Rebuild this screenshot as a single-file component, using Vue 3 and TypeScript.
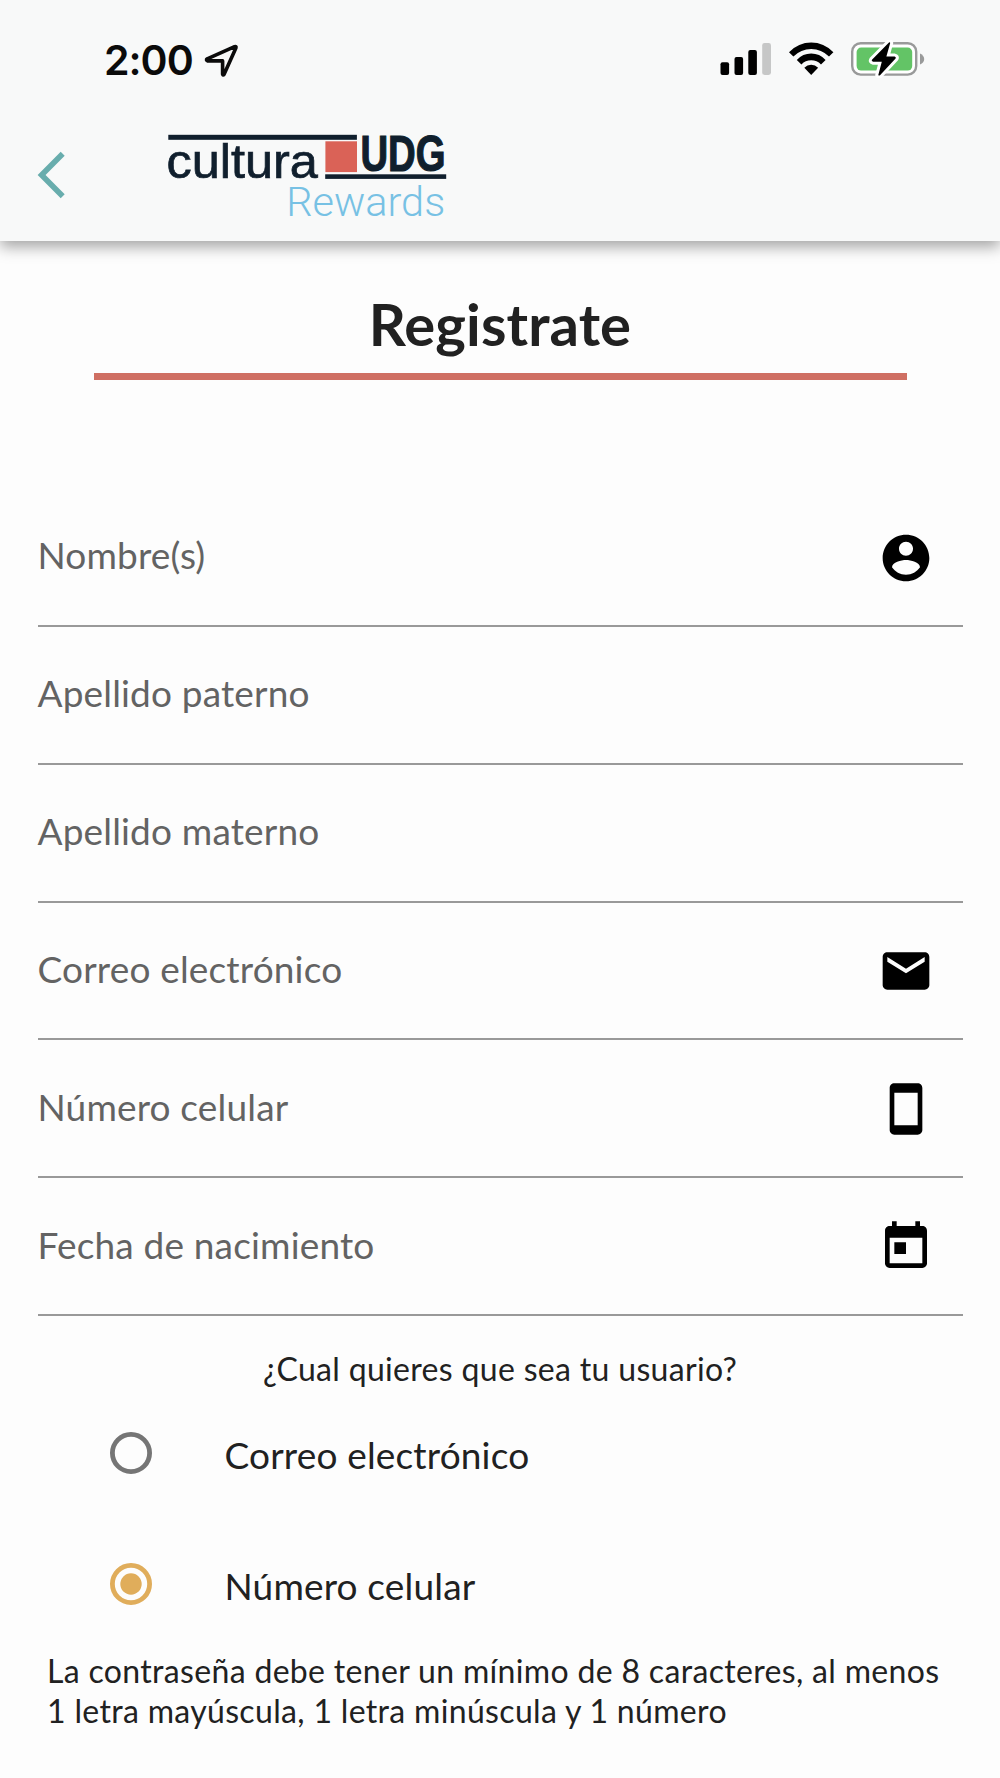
<script setup lang="ts">
import { ref } from 'vue'

interface Field {
  label: string
  icon?: string
}

const fields: Field[] = [
  {
    label: 'Nombre(s)',
    icon: 'M12 2C6.48 2 2 6.48 2 12s4.48 10 10 10 10-4.48 10-10S17.52 2 12 2zm0 3c1.66 0 3 1.34 3 3s-1.34 3-3 3-3-1.34-3-3 1.34-3 3-3zm0 14.2c-2.5 0-4.71-1.28-6-3.22.03-1.99 4-3.08 6-3.08 1.99 0 5.97 1.09 6 3.08-1.29 1.94-3.5 3.22-6 3.22z',
  },
  { label: 'Apellido paterno' },
  { label: 'Apellido materno' },
  {
    label: 'Correo electrónico',
    icon: 'M20 4H4c-1.1 0-1.99.9-1.99 2L2 18c0 1.1.9 2 2 2h16c1.1 0 2-.9 2-2V6c0-1.1-.9-2-2-2zm0 4l-8 5-8-5V6l8 5 8-5v2z',
  },
  {
    label: 'Número celular',
    icon: 'M17 1.01L7 1c-1.1 0-1.99.9-1.99 2v18c0 1.1.89 2 1.99 2h10c1.1 0 2-.9 2-2V3c0-1.1-.9-1.99-2-1.99zM17 19H7V5h10v14z',
  },
  {
    label: 'Fecha de nacimiento',
    icon: 'M19 3h-1V1h-2v2H8V1H6v2H5c-1.11 0-1.99.9-1.99 2L3 19c0 1.1.89 2 2 2h14c1.1 0 2-.9 2-2V5c0-1.1-.9-2-2-2zm0 16H5V8h14v11zM7 10h5v5H7z',
  },
]

const options: string[] = ['Correo electrónico', 'Número celular']
const selected = ref<string>('Número celular')
</script>

<template>
  <div class="screen">
    <header class="header">
      <div class="status">
        <div class="clock">
          <span class="time">2:00</span>
          <svg class="location" width="36" height="36" viewBox="0 0 36 36">
            <path d="M4.2 16.8L31.6 4.6Q33.6 4 32.9 6L21 32.4Q20 33.8 19.6 32V18.9H4.6Q2.6 17.9 4.2 16.8Z" fill="none" stroke="#0b0b0b" stroke-width="3.6" stroke-linejoin="round" />
          </svg>
        </div>
        <svg class="indicators" width="206" height="38" viewBox="720 40 206 38">
          <rect x="720.5" y="62.3" width="8.6" height="12.7" rx="2" />
          <rect x="734.5" y="57" width="8.6" height="18" rx="2" />
          <rect x="748.3" y="50" width="8.6" height="25" rx="2" />
          <rect x="762.2" y="43" width="8.8" height="32" rx="2.4" fill="#c6c7c7" />
          <path d="M789 52.2Q798.5 42.5 811.2 42.5T833.4 52.2L829 56.6Q821.5 49 811.2 49T793.4 56.6Z" />
          <path d="M796.8 60Q802.8 53.6 811.2 53.6T825.6 60L821 64.4Q817 60.2 811.2 60.2T801.4 64.4Z" />
          <path d="M804.3 67.7Q807.2 64.8 811.2 64.8T818.1 67.7L811.2 75Z" />
          <rect x="852.2" y="43.2" width="64" height="31.4" rx="8.5" fill="#fff" stroke="#999a9a" stroke-width="2.4" />
          <rect x="856.6" y="47.6" width="55.6" height="23" rx="4.5" fill="#63c466" />
          <path d="M920 53.4Q924.2 55.4 924.2 59T920 64.6Z" fill="#999a9a" />
          <path d="M889 42.5L872.2 59.6Q871 61.4 873.2 61.7H881.8L878.3 75Q878.8 76 880 75.2L895.6 58.4Q896.4 57 894.6 56.6H886.4L890.2 43Q890 42 889 42.5Z" stroke="#fff" stroke-width="6" paint-order="stroke" />
        </svg>
      </div>
      <div class="bar">
        <svg class="back" width="30" height="50" viewBox="0 0 30 50">
          <path d="M25.7 3.7L4.6 25L25.7 46.3" fill="none" stroke="#68adad" stroke-width="5.6" />
        </svg>
        <svg class="logo" width="290" height="112" viewBox="166 120 290 112">
          <rect x="168.3" y="134.8" width="188.6" height="5" fill="#101f2d" />
          <rect x="325.4" y="141.3" width="31.6" height="30.8" fill="#da6257" />
          <rect x="325.2" y="174.3" width="121" height="4.6" fill="#101f2d" />
          <text x="166.4" y="178.2" textLength="151.5" lengthAdjust="spacingAndGlyphs" class="logo-cultura">cultura</text>
          <text x="360.4" y="171.2" textLength="85" lengthAdjust="spacingAndGlyphs" class="logo-udg">UDG</text>
          <text x="286.2" y="216" textLength="159" lengthAdjust="spacingAndGlyphs" class="logo-rewards">Rewards</text>
        </svg>
      </div>
    </header>

    <main class="content">
      <h1 class="title">Registrate</h1>

      <form class="form">
        <div v-for="field in fields" :key="field.label" class="field">
          <span class="label">{{ field.label }}</span>
          <svg v-if="field.icon" class="icon" viewBox="0 0 24 24">
            <path :d="field.icon" />
          </svg>
        </div>
      </form>

      <p class="question">¿Cual quieres que sea tu usuario?</p>

      <div class="options">
        <div v-for="option in options" :key="option" class="option" @click="selected = option">
          <svg class="radio" :class="{ on: option === selected }" width="44" height="46" viewBox="0 0 44 46">
            <circle cx="22" cy="23" r="18.6" fill="none" stroke="currentColor" stroke-width="4.8" />
            <circle v-if="option === selected" cx="22" cy="23" r="10.7" fill="currentColor" />
          </svg>
          <span class="option-label">{{ option }}</span>
        </div>
      </div>

      <p class="hint">La contraseña debe tener un mínimo de 8 caracteres, al menos<br>1 letra mayúscula, 1 letra minúscula y 1 número</p>
    </main>
  </div>
</template>

<style>
body {
  margin: 0;
  background: #fdfdfd;
}
</style>

<style scoped>
.screen {
  width: 1000px;
  height: 1778px;
  overflow: hidden;
  background: #fdfdfd;
  color: #212121;
  font-family: Lato, 'Open Sans', sans-serif;
}
.header {
  box-sizing: border-box;
  height: 241px;
  background: #f8f9f9;
  box-shadow: 0 6px 14px rgba(0, 0, 0, 0.35);
}
.status {
  display: flex;
  justify-content: space-between;
  box-sizing: border-box;
  height: 120px;
  padding: 40px 74px 0 104px;
}
.clock {
  display: flex;
}
.time {
  width: 99px;
  font: 600 41px/40px Inter, sans-serif;
  letter-spacing: -1px;
  color: #0b0b0b;
}
.location {
  margin-top: 2px;
}
.bar {
  display: flex;
  align-items: flex-start;
}
.back {
  margin: 30px 99px 0 37px;
}
.logo-cultura {
  font: 49px 'Liberation Sans', sans-serif;
  fill: #101f2d;
  stroke: #101f2d;
  stroke-width: 0.7px;
}
.logo-udg {
  font: bold 50.5px 'Liberation Sans', sans-serif;
  fill: #101f2d;
  stroke: #101f2d;
  stroke-width: 1.2px;
}
.logo-rewards {
  font: 300 41px Roboto, sans-serif;
  fill: #77c1e4;
}
.content {
  padding-top: 48px;
}
.title {
  width: 813px;
  height: 84px;
  margin: 0 auto;
  border-bottom: 7px solid #cf6f63;
  text-align: center;
  font-size: 58px;
  font-weight: 700;
  letter-spacing: 0.1px;
  line-height: 70px;
}
.form {
  margin: 109px 37.5px 0;
}
.field {
  display: flex;
  align-items: center;
  justify-content: space-between;
  box-sizing: border-box;
  height: 137.85px;
  padding-right: 28.5px;
  border-bottom: 2px solid #999;
}
.label {
  padding: 0 0 3px;
  font-size: 37px;
  line-height: 44px;
  letter-spacing: 0.17px;
  color: #636363;
}
.icon {
  width: 56px;
  height: 56px;
  padding-top: 2px;
  fill: #000;
}
.question {
  margin: 33px 0 0;
  text-align: center;
  font-size: 32px;
  line-height: 40px;
  letter-spacing: 0.32px;
}
.option {
  display: flex;
  align-items: center;
  height: 131px;
  padding-left: 109px;
}
.radio {
  margin-bottom: 3px;
  color: #757575;
}
.radio.on {
  color: #e0ad5b;
}
.option-label {
  margin-left: 71.5px;
  font-size: 37px;
  line-height: 44px;
  letter-spacing: 0.17px;
}
.hint {
  margin: 0 0 0 47px;
  font-size: 32px;
  line-height: 40px;
  letter-spacing: 0.33px;
  white-space: nowrap;
}
</style>
